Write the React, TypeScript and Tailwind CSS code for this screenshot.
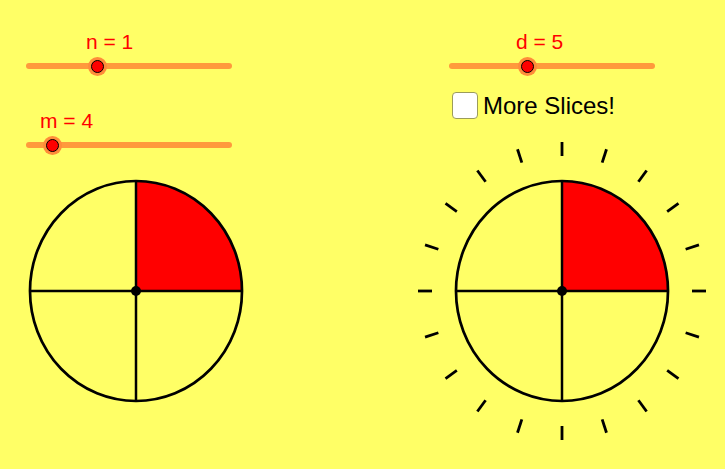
import React from "react";

type SliderProps = {
  left: number;
  top: number;
  width: number;
  knob: number;
};

function Slider({ left, top, width, knob }: SliderProps) {
  return (
    <div
      className="absolute h-[6px] rounded-full bg-[#ff9a3c]"
      style={{ left, top: top - 3, width }}
    >
      <div
        className="absolute w-[19px] h-[19px] rounded-full bg-[#ff8c3a] flex items-center justify-center"
        style={{ left: knob - left - 9.5, top: -6.5 }}
      >
        <div className="w-[13px] h-[13px] rounded-full bg-[#ff0000] border border-black" />
      </div>
    </div>
  );
}

function Pie({ cx, cy }: { cx: number; cy: number }) {
  const rx = 106;
  const ry = 110;
  return (
    <g>
      <path
        d={`M${cx},${cy} L${cx},${cy - ry} A${rx},${ry} 0 0 1 ${cx + rx},${cy} Z`}
        fill="#ff0000"
      />
      <ellipse cx={cx} cy={cy} rx={rx} ry={ry} fill="none" stroke="#000" strokeWidth={2.7} />
      <line x1={cx - rx} y1={cy} x2={cx + rx} y2={cy} stroke="#000" strokeWidth={2.5} />
      <line x1={cx} y1={cy - ry} x2={cx} y2={cy + ry} stroke="#000" strokeWidth={2.5} />
      <circle cx={cx} cy={cy} r={5} fill="#000" />
    </g>
  );
}

export default function App() {
  const ticks = Array.from({ length: 20 }, (_, k) => {
    const a = (k * 18 * Math.PI) / 180;
    const c = Math.cos(a);
    const s = Math.sin(a);
    return {
      x1: 562 + 130 * c,
      y1: 291 - 135 * s,
      x2: 562 + 144 * c,
      y2: 291 - 149 * s,
    };
  });

  return (
    <div
      className="relative w-[725px] h-[469px] overflow-hidden bg-[#ffff66]"
      style={{ fontFamily: '"Liberation Sans", Arial, sans-serif' }}
    >
      <svg className="absolute inset-0" width={725} height={469}>
        <Pie cx={136} cy={291} />
        <Pie cx={562} cy={291} />
        {ticks.map((t, i) => (
          <line
            key={i}
            x1={t.x1}
            y1={t.y1}
            x2={t.x2}
            y2={t.y2}
            stroke="#000"
            strokeWidth={2.8}
          />
        ))}
      </svg>

      <div className="absolute left-[86px] top-[30px] text-[21px] leading-[24px] text-[#ff0000] whitespace-pre">
        n = 1
      </div>
      <Slider left={26} top={66} width={206} knob={97} />

      <div className="absolute left-[40px] top-[109px] text-[21px] leading-[24px] text-[#ff0000] whitespace-pre">
        m = 4
      </div>
      <Slider left={26} top={145} width={206} knob={52} />

      <div className="absolute left-[516px] top-[30px] text-[21px] leading-[24px] text-[#ff0000] whitespace-pre">
        d = 5
      </div>
      <Slider left={449} top={66} width={206} knob={527} />

      <div className="absolute left-[452px] top-[92px] flex items-center gap-[5px]">
        <div className="w-[26px] h-[27px] rounded-[4px] bg-white border-[1.5px] border-[#9c9c5a]" />
        <span className="text-[24px] leading-[27px] text-black">More Slices!</span>
      </div>
    </div>
  );
}
